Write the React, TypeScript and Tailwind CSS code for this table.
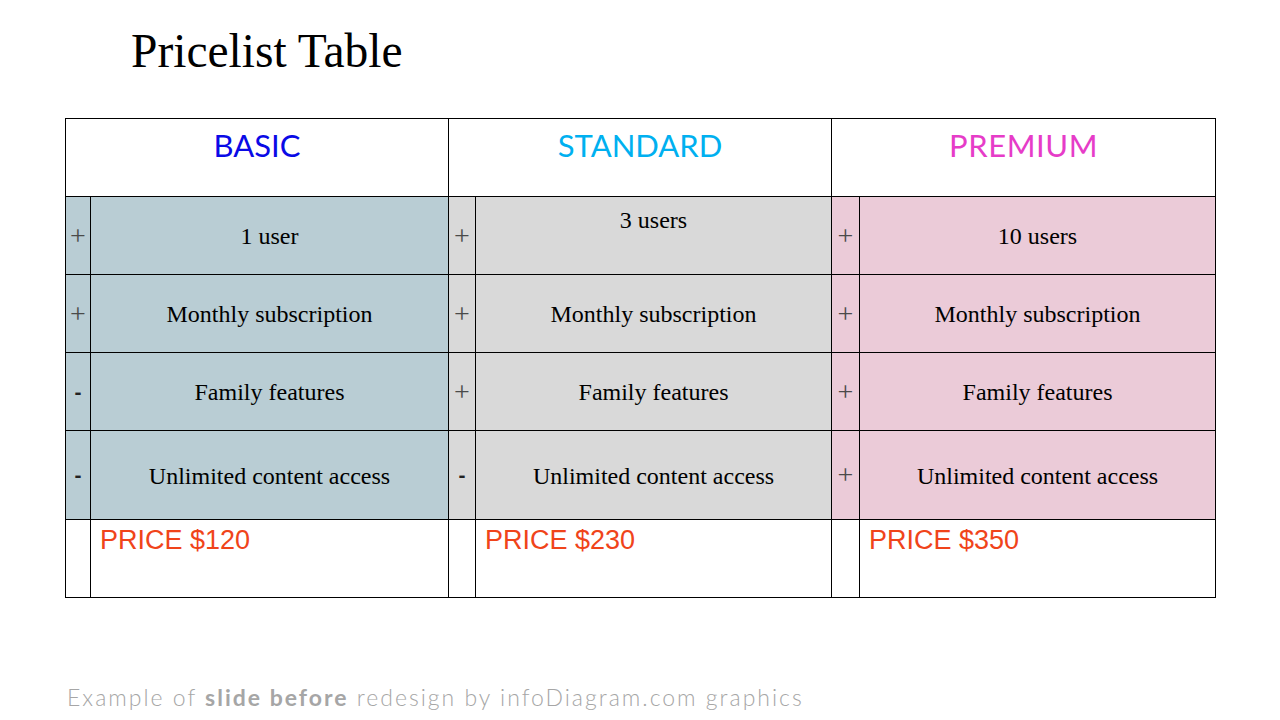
import React from "react";

type Plan = {
  name: string;
  nameColor: string;
  bg: string;
  signs: string[];
  features: string[];
  price: string;
};

const plans: Plan[] = [
  {
    name: "BASIC",
    nameColor: "text-[#0a0ae6]",
    bg: "bg-[#b9cdd4]",
    signs: ["+", "+", "-", "-"],
    features: ["1 user", "Monthly subscription", "Family features", "Unlimited content access"],
    price: "PRICE $120",
  },
  {
    name: "STANDARD",
    nameColor: "text-[#00b0f0]",
    bg: "bg-[#d9d9d9]",
    signs: ["+", "+", "+", "-"],
    features: ["3 users", "Monthly subscription", "Family features", "Unlimited content access"],
    price: "PRICE $230",
  },
  {
    name: "PREMIUM",
    nameColor: "text-[#e63cc8]",
    bg: "bg-[#ebcbd8]",
    signs: ["+", "+", "+", "+"],
    features: ["10 users", "Monthly subscription", "Family features", "Unlimited content access"],
    price: "PRICE $350",
  },
];

const rowHeights = ["h-[78px]", "h-[78px]", "h-[78px]", "h-[89px]"];

const serif = "font-['Liberation_Serif','Times_New_Roman',serif]";

const App: React.FC = () => {
  return (
    <div className="w-[1280px] h-[720px] bg-white overflow-hidden">
      {/* Title */}
      <h1 className={`${serif} pt-[27px] pl-[131px] text-[47.5px] leading-[48px] text-black`}>
        Pricelist Table
      </h1>

      {/* Price table */}
      <table className="ml-[65px] mt-[43px] w-[1150px] table-fixed border-collapse">
        <colgroup>
          <col className="w-[25px]" />
          <col className="w-[358px]" />
          <col className="w-[27px]" />
          <col className="w-[356px]" />
          <col className="w-[28px]" />
          <col className="w-[356px]" />
        </colgroup>
        <thead>
          <tr className="h-[78px]">
            {plans.map((p) => (
              <th
                key={p.name}
                colSpan={2}
                className={`border border-black align-top pt-[8px] font-['Lato','Open_Sans',sans-serif] font-normal text-[31px] leading-[36px] ${p.nameColor} ${
                  p.name === "PREMIUM" ? "tracking-[0.6px]" : ""
                }`}
              >
                {p.name}
              </th>
            ))}
          </tr>
        </thead>
        <tbody>
          {rowHeights.map((h, i) => (
            <tr key={i} className={h}>
              {plans.map((p) => (
                <React.Fragment key={p.name}>
                  <td
                    className={`border border-black ${p.bg} text-center align-middle ${
                      p.signs[i] === "-"
                        ? "font-['Liberation_Sans',Arial,sans-serif] font-bold text-[21px] text-[#222]"
                        : `${serif} text-[28px] leading-[28px] text-[#4a4a4a]`
                    }`}
                  >
                    {p.signs[i]}
                  </td>
                  <td
                    className={`border border-black ${p.bg} ${serif} text-[24px] leading-[28px] text-black text-center ${
                      p.name === "STANDARD" && i === 0 ? "align-top pt-[9px]" : "align-middle pt-[1px]"
                    }`}
                  >
                    {p.features[i]}
                  </td>
                </React.Fragment>
              ))}
            </tr>
          ))}
          <tr className="h-[78px]">
            {plans.map((p) => (
              <React.Fragment key={p.name}>
                <td className="border border-black" />
                <td className="border border-black align-top pt-[5px] pl-[9px] font-['Liberation_Sans',Arial,sans-serif] text-[27px] leading-[31px] text-[#f0441a]">
                  {p.price}
                </td>
              </React.Fragment>
            ))}
          </tr>
        </tbody>
      </table>

      {/* Footer note */}
      <p className="mt-[85px] pl-[67px] font-['Lato',sans-serif] font-light text-[23px] leading-[28px] tracking-[2px] text-[#a6a6a6]">
        Example of <span className="font-bold">slide before</span> redesign by infoDiagram.com graphics
      </p>
    </div>
  );
};

export default App;
